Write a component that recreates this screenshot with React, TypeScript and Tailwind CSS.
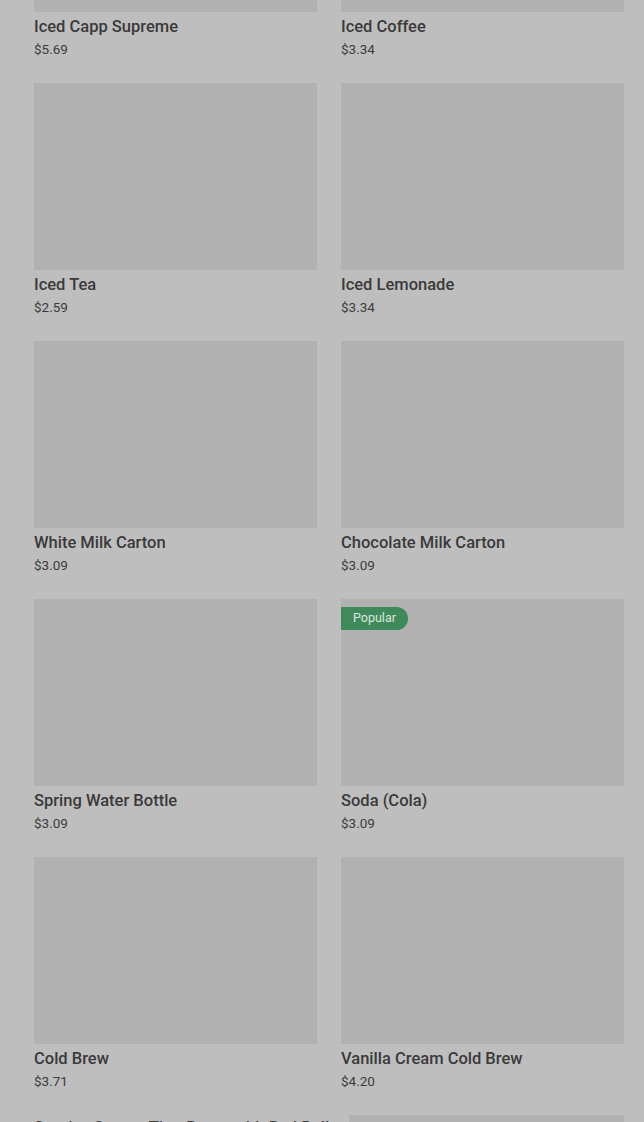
import React from "react";

type Item = { name: string; price: string; badge?: string; noImage?: boolean; shift?: boolean };

const items: Item[] = [
  { name: "Iced Capp Supreme", price: "$5.69" },
  { name: "Iced Coffee", price: "$3.34" },
  { name: "Iced Tea", price: "$2.59" },
  { name: "Iced Lemonade", price: "$3.34" },
  { name: "White Milk Carton", price: "$3.09" },
  { name: "Chocolate Milk Carton", price: "$3.09" },
  { name: "Spring Water Bottle", price: "$3.09" },
  { name: "Soda (Cola)", price: "$3.09", badge: "Popular" },
  { name: "Cold Brew", price: "$3.71" },
  { name: "Vanilla Cream Cold Brew", price: "$4.20" },
  { name: "Sunrise Sunset TimeBoost with Red Bull", price: "$4.49", noImage: true },
  { name: "Caramel Cold Brew", price: "$4.20", shift: true },
];

function Card({ item }: { item: Item }) {
  return (
    <div className="flex flex-col min-w-0">
      {!item.noImage && (
        <div className={item.shift ? "pl-[8px]" : ""}>
          <div className="relative h-[187px] bg-[#b1b1b1]">
            {item.badge && (
              <span className="absolute left-0 top-[8px] h-[23px] px-[12px] flex items-center rounded-r-[12px] bg-[#3f8a5b] text-[#dde6df] text-[12.5px] leading-none">
                {item.badge}
              </span>
            )}
          </div>
        </div>
      )}
      <div className={item.noImage ? "mt-[1px]" : "mt-[3px]"}>
        <div className="text-[16.5px] leading-6 font-medium text-[#3a3a3a] whitespace-nowrap">{item.name}</div>
        <div className="text-[13.5px] leading-5 text-[#3c3c3c]">{item.price}</div>
      </div>
    </div>
  );
}

export default function App() {
  return (
    <div
      className="w-[644px] h-[1122px] overflow-hidden bg-[#bebebe]"
      style={{ fontFamily: "Roboto, 'Noto Sans', sans-serif" }}
    >
      <div className="grid grid-cols-2 gap-x-[24px] gap-y-[24px] pl-[34px] pr-[20px] mt-[-175px]">
        {items.map((it) => (
          <Card key={it.name} item={it} />
        ))}
      </div>
    </div>
  );
}
